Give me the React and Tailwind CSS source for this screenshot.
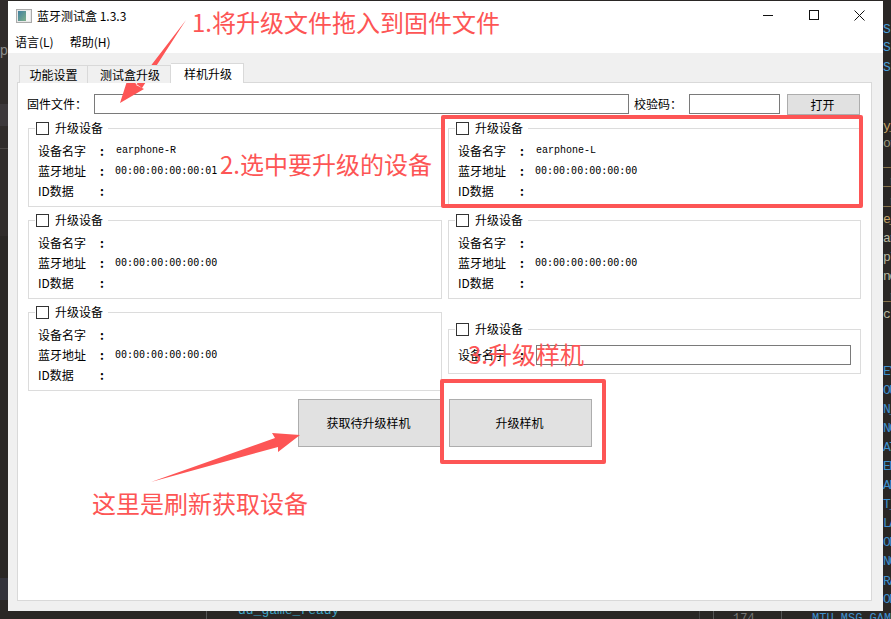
const Row = ({ label, value = '', mono = false }) => {
    return (
        <div className="flex items-center h-[20px] text-[12px] text-black">
            <span className="w-[62px]">{label}</span>
            <span className="w-[15px] font-bold">:</span>
            <span className={mono ? "font-['Liberation_Mono'] text-[10px] ml-[1px] -mt-[1px]" : "font-['DejaVu_Sans_Mono'] text-[10px] -mt-[2px]"}>{value}</span>
        </div>
    );
};

const Legend = () => (
    <div className="absolute left-[6px] -top-[9px] flex items-center bg-white px-[1px] h-[16px] text-[12px]">
        <span className="block w-[13px] h-[13px] border border-[#333] bg-white" />
        <span className="ml-[6px] mr-[4px]">升级设备</span>
    </div>
);

const Group = ({ name = '', addr = '00:00:00:00:00:00' }) => {
    return (
        <div className="relative border border-[#dcdcdc] h-[79px] pl-[9px] pt-[12px]">
            <Legend />
            <Row label="设备名字" value={name} mono />
            <Row label="蓝牙地址" value={addr} />
            <Row label="ID数据" />
        </div>
    );
};

const Btn = ({ children, className = '' }) => (
    <div className={`flex items-center justify-center pr-[2px] bg-[#e1e1e1] border border-[#adadad] text-[12px] text-black ${className}`}>
        {children}
    </div>
);

const Arrow = ({ points }) => (
    <svg className="absolute left-0 top-0 pointer-events-none" width="891" height="619">
        <polygon points={points} fill="#fd5555" />
    </svg>
);

const Note = ({ children, className }) => (
    <div className={`absolute text-[24px] leading-[32px] text-[#fd5555] whitespace-nowrap ${className}`}>{children}</div>
);

const rightCode = [
    ['S', 22, 'text-[#4a9fd8]'], ['S', 40, 'text-[#4a9fd8]'], ['S', 60, 'text-[#4a9fd8]'],
    ['y_', 119, 'text-[#c9a86a]'], ['or', 136, 'text-[#9a9a80]'], ['_', 155, 'text-[#c9a86a]'],
    ['_r', 174, 'text-[#c9a86a]'], ['_r', 194, 'text-[#c9a86a]'], ['e_', 212, 'text-[#c9a86a]'],
    ['ar', 231, 'text-[#b9b9a0]'], ['pl', 250, 'text-[#b9b9a0]'], ['ne', 269, 'text-[#b9b9a0]'],
    ['_r', 289, 'text-[#c9a86a]'], ['c', 307, 'text-[#b9b9a0]'],
    ['EY', 364, 'text-[#3f8fcc]'], ['OU', 383, 'text-[#3f8fcc]'], ['N_', 402, 'text-[#3f8fcc]'],
    ['NC', 421, 'text-[#3f8fcc]'], ['AT', 440, 'text-[#3f8fcc]'], ['EN', 459, 'text-[#3f8fcc]'],
    ['AN', 478, 'text-[#3f8fcc]'], ['T_', 497, 'text-[#3f8fcc]'], ['LA', 516, 'text-[#3f8fcc]'],
    ['ON', 535, 'text-[#3f8fcc]'], ['NC', 554, 'text-[#3f8fcc]'], ['RA', 574, 'text-[#3f8fcc]'],
    ['ON', 592, 'text-[#3f8fcc]'],
];

export default function App() {
    return (
        <div className="relative w-[891px] h-[619px] overflow-hidden bg-[#2a2725] font-['Noto_Sans_CJK_SC','Noto_Sans',sans-serif] pl-[8px] pt-[1px]">
            {/* fond : bouts de code derriere la fenetre */}
            <div className="absolute left-0 top-0 w-[8px] h-[236px] bg-[#302c2b]" />
            <div className="absolute left-0 top-[104px] w-[8px] h-[22px] bg-[#3c383b]" />
            <div className="absolute left-0 top-[148px] w-[8px] h-px bg-[#4b4745]" />
            <div className="absolute left-0 top-[578px] w-[8px] h-[22px] bg-[#34343c]" />
            <span className="absolute left-0 top-[42px] font-['Liberation_Sans'] text-[14px] leading-[16px] text-[#8a8a8a]">p</span>
            {rightCode.map(([t, y, c]) => (
                <span key={y} style={{ top: y }} className={`absolute left-[883px] font-['Liberation_Mono'] text-[13px] leading-[16px] tracking-[-1.5px] ${c}`}>{t}</span>
            ))}
            <div className="absolute left-[206px] top-[611px] w-px h-[8px] bg-[#555]" />
            <div className="absolute left-[699px] top-[611px] w-px h-[8px] bg-[#444]" />
            <div className="absolute left-[713px] top-[611px] w-px h-[8px] bg-[#555]" />
            <div className="absolute left-[781px] top-[611px] w-px h-[8px] bg-[#555]" />
            <span className="absolute left-[238px] top-[603px] font-['Liberation_Mono'] text-[13px] leading-[16px] text-[#3fa8c8]">dd_game_ready</span>
            <span className="absolute left-[733px] top-[612px] font-['Liberation_Mono'] text-[12px] leading-[14px] text-[#777]">174</span>
            <span className="absolute left-[812px] top-[612px] font-['Liberation_Mono'] text-[12px] leading-[14px] text-[#3f8fcc]">MTU_MSG_GAME</span>

            {/* fenetre */}
            <div className="relative w-[875px] h-[610px] bg-[#f0f0f0] flex flex-col text-black">
                <div className="bg-white h-[52px] shrink-0">
                    <div className="flex items-center h-[30px] pl-[8px]">
                        <svg width="16" height="14" viewBox="0 0 16 14">
                            <defs>
                                <linearGradient id="ico" x1="0" y1="0" x2="1" y2="1">
                                    <stop offset="0" stopColor="#3f7fa0" />
                                    <stop offset="1" stopColor="#7fb08a" />
                                </linearGradient>
                            </defs>
                            <rect x="0.5" y="0.5" width="15" height="13" fill="#e8e8e8" stroke="#aaa" />
                            <rect x="2" y="2" width="8" height="10" fill="url(#ico)" />
                            <rect x="10" y="2" width="4" height="10" fill="#f5f5f5" />
                        </svg>
                        <span className="ml-[5px] text-[12px]">蓝牙测试盒 1.3.3</span>
                        <div className="ml-auto flex items-center">
                            <svg width="46" height="30" viewBox="0 0 46 30"><path d="M18 14.5h10" stroke="#111" /></svg>
                            <svg width="46" height="30" viewBox="0 0 46 30"><rect x="18.5" y="9.5" width="9" height="9" fill="none" stroke="#111" /></svg>
                            <svg width="46" height="30" viewBox="0 0 46 30"><path d="M17.5 9.5l10 10M27.5 9.5l-10 10" stroke="#111" /></svg>
                        </div>
                    </div>
                    <div className="flex gap-[16px] pl-[7px] text-[12px] leading-[22px]">
                        <span>语言(L)</span>
                        <span>帮助(H)</span>
                    </div>
                </div>

                <div className="flex flex-col pl-[9px] pr-[11px] pt-[10px] pb-[10px] flex-1">
                    {/* onglets */}
                    <div className="flex items-end h-[20px] pl-[2px] text-[12px] -mb-[1px] z-10">
                        <div className="h-[18px] w-[69px] border border-b-0 border-[#d9d9d9] bg-[#f0f0f0] flex items-center justify-center">功能设置</div>
                        <div className="h-[18px] w-[83px] pl-[2px] border border-l-0 border-b-0 border-[#d9d9d9] bg-[#f0f0f0] flex items-center justify-center">测试盒升级</div>
                        <div className="h-[20px] w-[73px] pl-[2px] border border-l-0 border-b-0 border-[#d9d9d9] bg-white flex items-center justify-center">样机升级</div>
                    </div>

                    <div className="flex-1 bg-white border border-[#d9d9d9] px-[10px] pt-[11px] text-[12px]">
                        <div className="flex items-start h-[20px] -ml-[1px]">
                            <span className="w-[67px] leading-[20px]">固件文件：</span>
                            <div className="w-[535px] h-[20px] border border-[#7a7a7a]" />
                            <span className="ml-[5px] w-[55px] leading-[20px]">校验码：</span>
                            <div className="w-[91px] h-[20px] border border-[#7a7a7a]" />
                            <Btn className="ml-[7px] w-[73px] h-[21px]">打开</Btn>
                        </div>

                        <div className="grid grid-cols-[414px_413px] gap-x-[6px] mt-[14px]">
                            <div className="flex flex-col gap-[13px]">
                                <Group name="earphone-R" addr="00:00:00:00:00:01" />
                                <Group />
                                <Group />
                            </div>
                            <div className="flex flex-col gap-[13px]">
                                <Group name="earphone-L" />
                                <Group />
                                <div className="relative mt-[17px] border border-[#dcdcdc] h-[45px] pl-[9px] pt-[15px]">
                                    <Legend />
                                    <div className="flex items-center h-[20px]">
                                        <span className="w-[62px]">设备名字</span>
                                        <span className="w-[16px] font-bold">:</span>
                                        <div className="w-[315px] h-[20px] border border-[#7a7a7a]" />
                                    </div>
                                </div>
                            </div>
                        </div>

                        <div className="flex gap-[8px] mt-[8px] ml-[270px]">
                            <Btn className="w-[143px] h-[48px]">获取待升级样机</Btn>
                            <Btn className="w-[143px] h-[48px]">升级样机</Btn>
                        </div>
                    </div>
                </div>
            </div>

            {/* annotations */}
            <Note className="left-[192px] top-[6px]">1.将升级文件拖入到固件文件</Note>
            <Note className="left-[220px] top-[148px]">2.选中要升级的设备</Note>
            <Note className="left-[468px] top-[338px]">3.升级样机</Note>
            <Note className="left-[92px] top-[487px]">这里是刷新获取设备</Note>
            <Arrow points="186,20 142,88 128,78 120,103 144,89 136,85" />
            <Arrow points="151,482 275,438 272,433 300,435 278,452 278,447" />
            <div className="absolute left-[441px] top-[115px] w-[422px] h-[93px] border-[4px] border-[#fd5555] rounded-[2px]" />
            <div className="absolute left-[440px] top-[379px] w-[166px] h-[85px] border-[4px] border-[#fd5555] rounded-[2px]" />
        </div>
    );
}
